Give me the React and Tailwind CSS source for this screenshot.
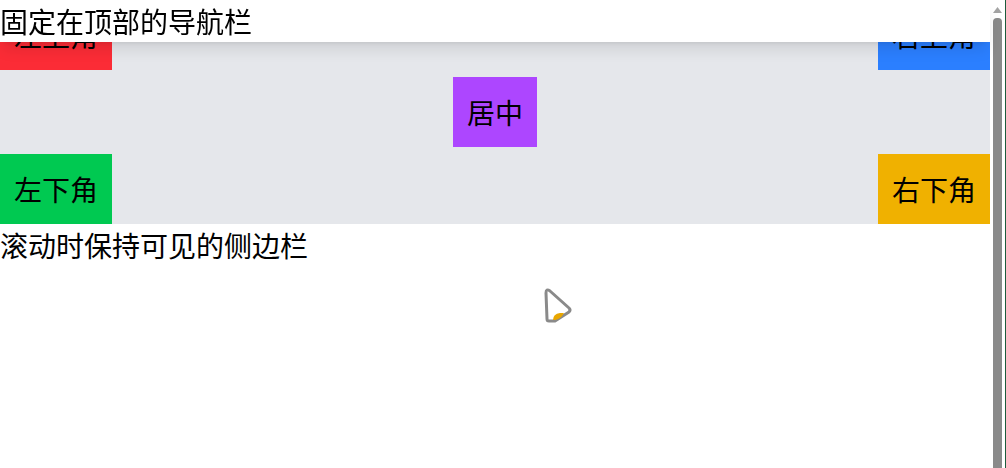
import React from 'react';

const cjk = { fontFamily: '"Noto Sans CJK SC", "Noto Sans", sans-serif' };

// Corner label box
const Tag = ({ color, children }) => (
  <div className={`${color} px-[14px] py-[14px] text-[28px] leading-[42px] text-black whitespace-nowrap`}>
    {children}
  </div>
);

export default function App() {
  return (
    <div className="flex h-[468px] overflow-hidden bg-white text-black" style={cjk}>
      <div className="relative flex-1">
        {/* Fixed top nav */}
        <nav className="fixed top-0 left-0 right-[16px] z-10 h-[42px] bg-white text-[28px] leading-[42px] shadow-lg">
          固定在顶部的导航栏
        </nav>

        {/* Gray positioning area */}
        <div className="flex h-[224px] flex-col justify-between bg-gray-200">
          <div className="flex justify-between">
            <Tag color="bg-red-500">左上角</Tag>
            <Tag color="bg-blue-500">右上角</Tag>
          </div>
          <div className="flex justify-center">
            <Tag color="bg-purple-500">居中</Tag>
          </div>
          <div className="flex justify-between">
            <Tag color="bg-green-500">左下角</Tag>
            <Tag color="bg-yellow-500">右下角</Tag>
          </div>
        </div>

        <div className="text-[28px] leading-[42px]">滚动时保持可见的侧边栏</div>

        {/* mouse pointer */}
        <svg className="absolute left-[540px] top-[286px] z-20" width="36" height="40" viewBox="0 0 36 40">
          <path
            d="M6 7 L7 33 Q7 35 9 35 L15 35 L29 26 Q31 24 29 22 L10 5 Q6 2 6 7 Z"
            fill="#fff"
            stroke="#8a8a8a"
            strokeWidth="3"
            strokeLinejoin="round"
          />
          <path d="M13 34 Q13 28 20 27 L24 27 Q21 33 15 34 Z" fill="#e8a600" />
        </svg>
      </div>

      {/* scrollbar */}
      <div className="flex w-[16px] flex-col items-start border-r border-[#1d5c3c] bg-white pl-[3px]">
        <svg className="mt-[7px]" width="9" height="6" viewBox="0 0 9 6">
          <path d="M4.5 0 L9 6 L0 6 Z" fill="#a3a3a3" />
        </svg>
        <div className="mt-[5px] w-[9px] flex-1 rounded-t-[4px] bg-[#8a8a8a]" />
      </div>
    </div>
  );
}
